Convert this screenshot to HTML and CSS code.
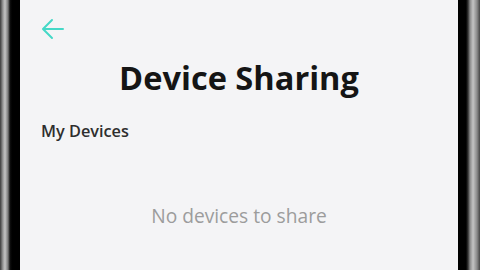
FILE: index.html
```html
<!DOCTYPE html>
<html>
<head>
    <title>Device Sharing</title>
    <link rel="stylesheet" href="styles.css">
</head>
<body>
    <div class="phone">
        <div class="bezel left"></div>
        <div class="screen">
            <div class="topbar">
                <svg class="back" width="24" height="22" viewBox="0 0 24 22">
                    <path d="M22 11H3M11 2L2 11L11 20" fill="none" stroke="#45d8c7" stroke-width="2" stroke-linecap="round" stroke-linejoin="round"/>
                </svg>
            </div>
            <h1>Device Sharing</h1>
            <h4>My Devices</h4>
            <p class="empty">No devices to share</p>
        </div>
        <div class="bezel right"></div>
    </div>
</body>
</html>
```

FILE: styles.css
```css
body {
    margin: 0;
    font-family: "Open Sans", sans-serif;
}
.phone {
    display: flex;
    width: 480px;
    height: 270px;
    overflow: hidden;
}
.bezel {
    width: 20px;
    flex-shrink: 0;
}
.bezel.left {
    background: linear-gradient(to right, #3a3a3a 0px, #9a9a9a 3px, #c4c4c4 5px, #7a7a7a 8px, #111 10px, #000 12px);
}
.bezel.right {
    width: 22px;
    background: linear-gradient(to right, #000 0px, #000 8px, #333 10px, #8a8a8a 12px, #c4c4c4 15px, #8a8a8a 19px, #444 22px);
}
.screen {
    flex: 1;
    background-color: #f4f4f6;
    padding: 0 21px;
}
.topbar {
    height: 58px;
    padding-top: 18px;
    box-sizing: border-box;
}
.back {
    display: block;
}
h1 {
    text-align: center;
    font-size: 32.6px;
    font-weight: 700;
    color: #151515;
    margin: 0;
    line-height: 40px;
}
h4 {
    font-size: 16.3px;
    font-weight: 600;
    color: #2e2e2e;
    margin: 22px 0 0 0;
    line-height: 22px;
}
.empty {
    text-align: center;
    font-size: 19.2px;
    color: #9c9c9c;
    margin: 61px 0 0 0;
    line-height: 26px;
}
```
